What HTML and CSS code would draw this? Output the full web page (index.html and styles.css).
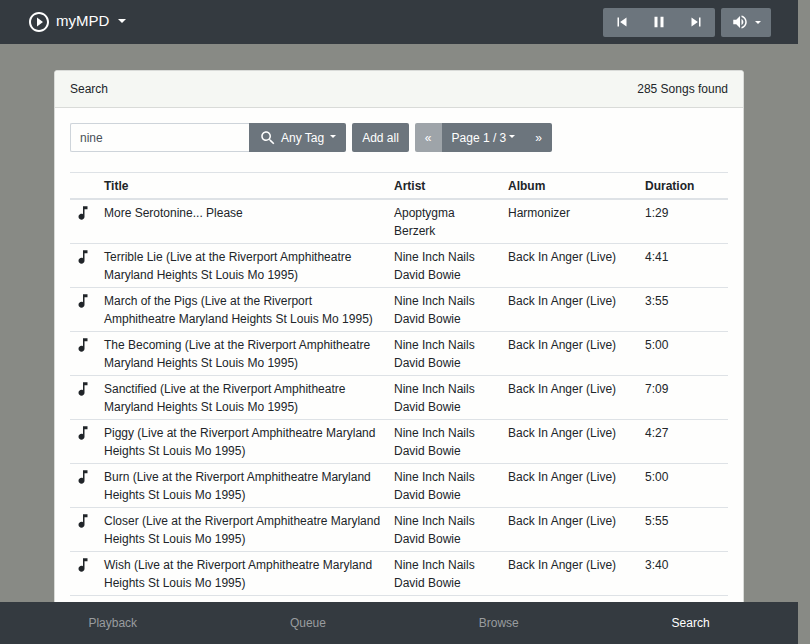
FILE: index.html
```html
<!DOCTYPE html>
<html lang="en">
<head>
<meta charset="utf-8">
<title>myMPD</title>
<link rel="stylesheet" href="styles.css">
</head>
<body>
<header class="topbar">
  <button class="brand" type="button">
    <svg class="brand-logo" viewBox="0 0 24 24" aria-hidden="true"><path d="M10 16.500l6-4.500-6-4.500v9zM12 2C6.480 2 2 6.480 2 12s4.480 10 10 10 10-4.480 10-10S17.520 2 12 2zm0 18c-4.410 0-8-3.590-8-8s3.590-8 8-8 8 3.590 8 8-3.590 8-8 8z"/></svg>
    <span>myMPD</span>
    <span class="caret"></span>
  </button>
  <div class="controls">
    <div class="group">
      <button class="btn player" type="button" aria-label="Previous"><svg class="icon" viewBox="0 0 24 24"><path d="M6 6h2v12H6zm3.500 6l8.500 6V6z"/></svg></button>
      <button class="btn player" type="button" aria-label="Pause"><svg class="icon" viewBox="0 0 24 24"><path d="M6 19h4V5H6v14zm8-14v14h4V5h-4z"/></svg></button>
      <button class="btn player" type="button" aria-label="Next"><svg class="icon" viewBox="0 0 24 24"><path d="M6 18l8.500-6L6 6v12zM16 6v12h2V6h-2z"/></svg></button>
    </div>
    <button class="btn volume" type="button" aria-label="Volume"><svg class="icon" viewBox="0 0 24 24"><path d="M3 9v6h4l5 5V4L7 9H3zm13.500 3c0-1.770-1.020-3.290-2.500-4.030v8.050c1.480-.73 2.500-2.250 2.500-4.020zM14 3.230v2.060c2.890.86 5 3.540 5 6.710s-2.110 5.850-5 6.710v2.060c4.010-.91 7-4.490 7-8.770s-2.990-7.860-7-8.770z"/></svg><span class="caret"></span></button>
  </div>
</header>

<main class="content">
  <section class="card">
    <div class="card-header"><span>Search</span><span>285 Songs found</span></div>
    <div class="card-body">
      <div class="toolbar">
        <div class="group">
          <input class="search" type="text" value="nine" aria-label="Search">
          <button class="btn tag" type="button"><svg class="icon" viewBox="0 0 24 24" aria-hidden="true"><path d="M15.500 14h-.79l-.28-.27C15.410 12.590 16 11.110 16 9.500 16 5.910 13.090 3 9.500 3S3 5.910 3 9.500 5.910 16 9.500 16c1.610 0 3.090-.59 4.230-1.570l.27.28v.79l5 4.990L20.490 19l-4.990-5zm-6 0C7.010 14 5 11.990 5 9.500S7.010 5 9.500 5 14 7.010 14 9.500 11.990 14 9.500 14z"/></svg><span>Any Tag</span><span class="caret"></span></button>
        </div>
        <button class="btn" type="button">Add all</button>
        <div class="group">
          <button class="btn" type="button" aria-label="Previous page" disabled>«</button>
          <button class="btn page" type="button"><span>Page 1 / 3</span><span class="caret"></span></button>
          <button class="btn" type="button" aria-label="Next page">»</button>
        </div>
      </div>
      <table class="songs">
        <colgroup><col class="col-icon"><col><col class="col-artist"><col class="col-album"><col class="col-duration"></colgroup>
        <thead><tr><th></th><th>Title</th><th>Artist</th><th>Album</th><th>Duration</th></tr></thead>
        <tbody>
          <tr><td><svg class="note" viewBox="0 0 24 24"><use href="#note"/></svg></td><td>More Serotonine... Please</td><td>Apoptygma Berzerk</td><td>Harmonizer</td><td>1:29</td></tr>
          <tr><td><svg class="note" viewBox="0 0 24 24"><use href="#note"/></svg></td><td>Terrible Lie (Live at the Riverport Amphitheatre Maryland Heights St Louis Mo 1995)</td><td>Nine Inch Nails David Bowie</td><td>Back In Anger (Live)</td><td>4:41</td></tr>
          <tr><td><svg class="note" viewBox="0 0 24 24"><use href="#note"/></svg></td><td>March of the Pigs (Live at the Riverport<br>Amphitheatre Maryland Heights St Louis Mo 1995)</td><td>Nine Inch Nails David Bowie</td><td>Back In Anger (Live)</td><td>3:55</td></tr>
          <tr><td><svg class="note" viewBox="0 0 24 24"><use href="#note"/></svg></td><td>The Becoming (Live at the Riverport Amphitheatre Maryland Heights St Louis Mo 1995)</td><td>Nine Inch Nails David Bowie</td><td>Back In Anger (Live)</td><td>5:00</td></tr>
          <tr><td><svg class="note" viewBox="0 0 24 24"><use href="#note"/></svg></td><td>Sanctified (Live at the Riverport Amphitheatre Maryland Heights St Louis Mo 1995)</td><td>Nine Inch Nails David Bowie</td><td>Back In Anger (Live)</td><td>7:09</td></tr>
          <tr><td><svg class="note" viewBox="0 0 24 24"><use href="#note"/></svg></td><td>Piggy (Live at the Riverport Amphitheatre Maryland Heights St Louis Mo 1995)</td><td>Nine Inch Nails David Bowie</td><td>Back In Anger (Live)</td><td>4:27</td></tr>
          <tr><td><svg class="note" viewBox="0 0 24 24"><use href="#note"/></svg></td><td>Burn (Live at the Riverport Amphitheatre Maryland Heights St Louis Mo 1995)</td><td>Nine Inch Nails David Bowie</td><td>Back In Anger (Live)</td><td>5:00</td></tr>
          <tr><td><svg class="note" viewBox="0 0 24 24"><use href="#note"/></svg></td><td>Closer (Live at the Riverport Amphitheatre Maryland Heights St Louis Mo 1995)</td><td>Nine Inch Nails David Bowie</td><td>Back In Anger (Live)</td><td>5:55</td></tr>
          <tr><td><svg class="note" viewBox="0 0 24 24"><use href="#note"/></svg></td><td>Wish (Live at the Riverport Amphitheatre Maryland Heights St Louis Mo 1995)</td><td>Nine Inch Nails David Bowie</td><td>Back In Anger (Live)</td><td>3:40</td></tr>
        </tbody>
      </table>
    </div>
  </section>
</main>

<nav class="bottombar">
  <a href="#playback">Playback</a>
  <a href="#queue">Queue</a>
  <a href="#browse">Browse</a>
  <a href="#search" class="active">Search</a>
</nav>

<svg class="sprite" aria-hidden="true"><symbol id="note" viewBox="0 0 24 24"><path d="M12 3v10.550c-.59-.34-1.270-.55-2-.55-2.210 0-4 1.790-4 4s1.790 4 4 4 4-1.790 4-4V7h4V3h-6z"/></symbol></svg>
</body>
</html>
```
FILE: styles.css
```css
* { box-sizing: border-box; }

body {
  margin: 0;
  padding-right: 12px;
  height: 100vh;
  overflow: hidden;
  display: flex;
  flex-direction: column;
  background: #888a85;
  color: #212529;
  font: 12px/18px "Liberation Sans", Arial, sans-serif;
}

button, input { font: inherit; margin: 0; }
svg { fill: currentColor; display: block; flex: none; }
.sprite { display: none; }

.topbar {
  flex: none;
  height: 44px;
  padding: 0 27px;
  display: flex;
  align-items: center;
  justify-content: space-between;
  background: #343a40;
}

.brand {
  display: flex;
  align-items: center;
  padding: 0;
  border: 0;
  background: none;
  color: #fff;
  font-size: 15px;
}
.brand-logo { width: 24px; height: 24px; margin-right: 5px; }
.brand span { margin-bottom: 2px; }
.brand .caret { margin-left: 9px; border-width: 4px 4px 0; }

.caret {
  flex: none;
  margin-bottom: 2px;
  border: solid transparent;
  border-width: 3px 3px 0;
  border-top-color: currentColor;
}

.controls { display: flex; gap: 6px; }
.group { display: flex; }

.btn {
  display: flex;
  align-items: center;
  justify-content: center;
  height: 29px;
  padding: 0 10px;
  border: 0;
  border-radius: 2px;
  background: #6c757d;
  color: #fff;
  white-space: nowrap;
}
.btn:disabled { opacity: .65; }
.group > :not(:last-child) { border-top-right-radius: 0; border-bottom-right-radius: 0; }
.group > :not(:first-child) { border-top-left-radius: 0; border-bottom-left-radius: 0; }
.icon { width: 18px; height: 18px; }
.player { width: 38px; }
.player:nth-child(2) { width: 36px; }
.volume { gap: 6px; }
.volume .caret { margin-bottom: 0; }

.content { flex: 1; min-height: 0; overflow: hidden; padding: 26px 15px 0; }

.card {
  max-width: 690px;
  margin: 0 auto;
  border: 1px solid #d9dbd8;
  border-radius: 3px;
  background: #fefefd;
}
.card-header {
  display: flex;
  justify-content: space-between;
  padding: 9px 15px;
  border-bottom: 1px solid #d9dbd8;
  border-radius: 2px 2px 0 0;
  background: #f5f7f3;
}
.card-body { padding: 15px 15px 60px; }

.toolbar { display: flex; gap: 6px; margin-bottom: 20px; }
.search {
  width: 179px;
  height: 29px;
  padding: 0 9px;
  border: 1px solid #ced4da;
  border-right: 0;
  border-radius: 2px;
  background: #fefefd;
  color: #495057;
}
.tag { gap: 4px; }
.tag .caret { margin-left: 2px; }
.page { gap: 3px; }

.songs { width: 100%; table-layout: fixed; border-collapse: separate; border-spacing: 0; }
.col-icon { width: 30px; }
.col-artist { width: 114px; }
.col-album { width: 137px; }
.col-duration { width: 87px; }
.songs th, .songs td { text-align: left; vertical-align: top; padding: 4px 3px 3px 4px; }
.songs td:nth-child(3) { padding-right: 12px; }
.songs th { border-top: 1px solid #dee2e6; border-bottom: 2px solid #dee2e6; }
.songs td { border-bottom: 1px solid #dee2e6; }
.note { width: 18px; height: 18px; }

.bottombar {
  flex: none;
  height: 42px;
  padding: 0 12px;
  display: flex;
  align-items: center;
  background: #343a40;
}
.bottombar a { flex: 1 1 auto; text-align: center; text-decoration: none; color: #999c9f; }
.bottombar .active { color: #fff; }
```
